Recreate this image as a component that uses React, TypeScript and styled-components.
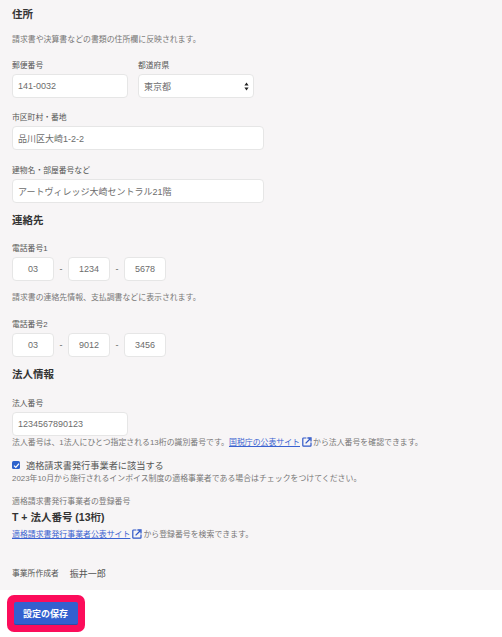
import React from "react"
import styled, { createGlobalStyle } from "styled-components"

const GlobalStyle = createGlobalStyle`
  html, body {
    margin: 0;
    padding: 0;
    background: #ffffff;
  }
  * {
    box-sizing: border-box;
  }
`

const Page = styled.div`
  width: 502px;
  height: 637px;
  overflow: hidden;
  display: flex;
  flex-direction: column;
  font-family: "Liberation Sans", "Noto Sans CJK JP", sans-serif;
  color: #666;
`

const Content = styled.div`
  height: 590px;
  background: #f7f5f6;
  padding: 7px 12px 0;
`

const Heading = styled.div<{ $top?: number }>`
  font-size: 10.5px;
  line-height: 14px;
  font-weight: 700;
  color: #333;
  margin-top: ${(p) => p.$top ?? 0}px;
`

const Note = styled.div<{ $top?: number }>`
  font-size: 7.9px;
  line-height: 12px;
  color: #777;
  margin-top: ${(p) => p.$top ?? 0}px;
  white-space: nowrap;
`

const Label = styled.div`
  font-size: 7.8px;
  line-height: 12px;
  color: #555;
  margin-bottom: 2px;
`

const Row = styled.div<{ $top?: number }>`
  display: flex;
  gap: 10px;
  margin-top: ${(p) => p.$top ?? 0}px;
`

const Field = styled.div<{ $top?: number }>`
  margin-top: ${(p) => p.$top ?? 0}px;
`

const Box = styled.div<{ $width: number; $center?: boolean }>`
  width: ${(p) => p.$width}px;
  height: 24px;
  background: #fff;
  border: 1px solid #e6e6e6;
  border-radius: 4px;
  display: flex;
  align-items: center;
  justify-content: ${(p) => (p.$center ? "center" : "space-between")};
  padding: ${(p) => (p.$center ? "0" : "0 4px 0 5px")};
  font-size: 9px;
  color: #6c6c6c;
`

const PhoneRow = styled.div`
  display: flex;
  align-items: center;
`

const Dash = styled.span`
  width: 14px;
  text-align: center;
  font-size: 9px;
  color: #666;
`

const Link = styled.a`
  color: #3a62d0;
  text-decoration: underline;
`

const ExternalIcon = styled.svg`
  width: 10px;
  height: 10px;
  vertical-align: -2px;
  margin: 0 1px 0 2px;
`

const CheckRow = styled.div`
  display: flex;
  align-items: center;
  gap: 6px;
  margin-top: 9px;
  height: 14px;
  font-size: 9.2px;
  color: #555;
`

const CheckBox = styled.span`
  width: 8px;
  height: 8px;
  border-radius: 1.5px;
  background: #2d62cc;
  display: flex;
  align-items: center;
  justify-content: center;
`

const BoldValue = styled.div`
  font-size: 10.5px;
  line-height: 14px;
  font-weight: 700;
  color: #333;
  margin-top: 2px;
`

const Creator = styled.div`
  display: flex;
  gap: 11px;
  align-items: center;
  margin-top: 27px;
  font-size: 7.8px;
  line-height: 12px;
  color: #555;
`

const CreatorName = styled.span`
  font-size: 9px;
`

const Footer = styled.div`
  flex: 1;
  background: #fff;
  padding: 5px 0 0 7px;
`

const SaveHighlight = styled.div`
  width: 78px;
  height: 37px;
  background: #fc0d5b;
  border-radius: 7px;
  display: flex;
  align-items: center;
  justify-content: center;
`

const SaveButton = styled.button`
  width: 64px;
  height: 23px;
  border: none;
  border-bottom: 1px solid #2a4ea8;
  border-radius: 2px;
  background: #3360cf;
  color: #fff;
  font-family: inherit;
  font-size: 9px;
  font-weight: 700;
  padding: 0 1px 0 0;
`

const Arrows = () => (
  <svg width="5" height="9" viewBox="0 0 5 9">
    <path d="M2.5 0.5 L4.6 3.6 H0.4 Z M2.5 8.5 L0.4 5.4 H4.6 Z" fill="#222" />
  </svg>
)

const External = () => (
  <ExternalIcon viewBox="0 0 10 10">
    <path d="M4.4 1 H1.6 Q0.8 1 0.8 1.8 V8.4 Q0.8 9.2 1.6 9.2 H8.2 Q9 9.2 9 8.4 V5.6" fill="none" stroke="#2f57c8" strokeWidth="1.2" />
    <path d="M3.6 6.4 L8 2 M5.4 1 H9 V4.6" fill="none" stroke="#2f57c8" strokeWidth="1.3" />
  </ExternalIcon>
)

const Phone = ({ parts }: { parts: string[] }) => (
  <PhoneRow>
    <Box $width={42} $center>{parts[0]}</Box>
    <Dash>-</Dash>
    <Box $width={42} $center>{parts[1]}</Box>
    <Dash>-</Dash>
    <Box $width={42} $center>{parts[2]}</Box>
  </PhoneRow>
)

const App: React.FC = () => {
  return (
    <>
      <GlobalStyle />
      <Page>
        <Content>
          <Heading>住所</Heading>
          <Note $top={13}>請求書や決算書などの書類の住所欄に反映されます。</Note>

          <Row $top={14}>
            <Field>
              <Label>郵便番号</Label>
              <Box $width={116}>141-0032</Box>
            </Field>
            <Field>
              <Label>都道府県</Label>
              <Box $width={116}>東京都<Arrows /></Box>
            </Field>
          </Row>
          <Field $top={14}>
            <Label>市区町村・番地</Label>
            <Box $width={252}>品川区大崎1-2-2</Box>
          </Field>
          <Field $top={15}>
            <Label>建物名・部屋番号など</Label>
            <Box $width={252}>アートヴィレッジ大崎セントラル21階</Box>
          </Field>

          <Heading $top={10}>連絡先</Heading>
          <Field $top={16}>
            <Label>電話番号1</Label>
            <Phone parts={["03", "1234", "5678"]} />
          </Field>
          <Note $top={11}>請求書の連絡先情報、支払調書などに表示されます。</Note>
          <Field $top={15}>
            <Label>電話番号2</Label>
            <Phone parts={["03", "9012", "3456"]} />
          </Field>

          <Heading $top={10}>法人情報</Heading>
          <Field $top={17}>
            <Label>法人番号</Label>
            <Box $width={116}>1234567890123</Box>
          </Field>
          <Note $top={1}>
            法人番号は、1法人にひとつ指定される13桁の識別番号です。<Link>国税庁の公表サイト</Link>
            <External />から法人番号を確認できます。
          </Note>

          <CheckRow>
            <CheckBox>
              <svg width="7" height="7" viewBox="0 0 7 7">
                <path d="M1 3.6 L2.8 5.4 L6 1.6" fill="none" stroke="#fff" strokeWidth="1.3" />
              </svg>
            </CheckBox>
            適格請求書発行事業者に該当する
          </CheckRow>
          <Note $top={1}>2023年10月から施行されるインボイス制度の適格事業者である場合はチェックをつけてください。</Note>

          <Note $top={11}>適格請求書発行事業者の登録番号</Note>
          <BoldValue>T + 法人番号 (13桁)</BoldValue>
          <Note $top={5}>
            <Link>適格請求書発行事業者公表サイト</Link>
            <External />から登録番号を検索できます。
          </Note>

          <Creator>
            事業所作成者
            <CreatorName>振井一郎</CreatorName>
          </Creator>
        </Content>
        <Footer>
          <SaveHighlight>
            <SaveButton>設定の保存</SaveButton>
          </SaveHighlight>
        </Footer>
      </Page>
    </>
  )
}

export default App
